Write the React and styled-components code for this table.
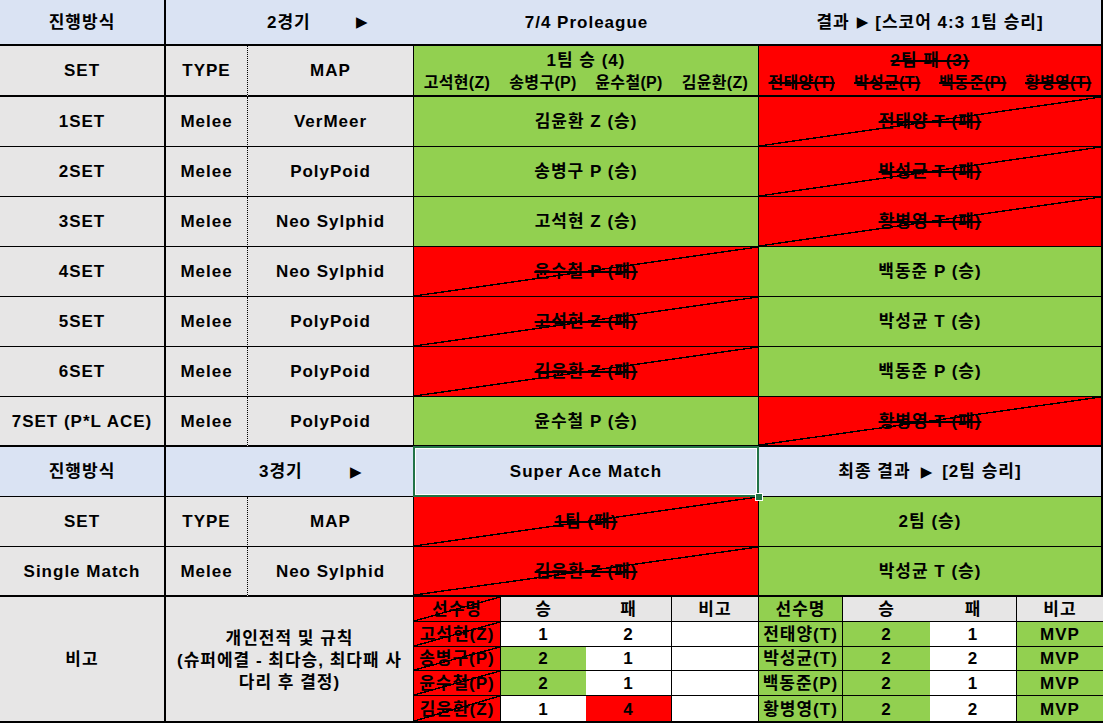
import React from 'react';
import styled, { createGlobalStyle, css } from 'styled-components';

const GlobalStyle = createGlobalStyle`
  html, body { margin: 0; padding: 0; background: #ffffff; }
  body {
    font-family: "Liberation Sans", "Noto Sans CJK KR", sans-serif;
    font-weight: 700;
    color: #000;
  }
`;

const BG = {
  blue: '#DAE3F3',
  grey: '#E7E6E6',
  green: '#92D050',
  red: '#FF0000',
  white: '#FFFFFF',
};

const crossLine = css`
  background-image: linear-gradient(
    to bottom right,
    transparent calc(50% - 0.7px),
    #000 calc(50% - 0.7px),
    #000 calc(50% + 0.7px),
    transparent calc(50% + 0.7px)
  );
`;

const Sheet = styled.div`
  display: grid;
  width: 1103px;
  grid-template-columns: 166px 82px 166px 345px 344px;
  grid-template-rows: 46px 51px repeat(10, 50px) 126px;
`;

const Cell = styled.div`
  grid-column: span ${(p) => p.$span || 1};
  box-sizing: border-box;
  display: flex;
  align-items: center;
  justify-content: center;
  padding-top: 2px;
  background-color: ${(p) => BG[p.$bg || 'grey']};
  border-right: ${(p) => p.$br || 'none'};
  border-bottom: ${(p) => p.$bb || 'none'};
  font-size: 17px;
  letter-spacing: 1px;
  line-height: 1.2;
  white-space: pre;
  ${(p) => p.$cross && crossLine}
`;

const Struck = styled.span`
  text-decoration: ${(p) => (p.$on ? 'line-through' : 'none')};
  text-decoration-thickness: 1.5px;
`;

const Arrow = styled.span`
  display: inline-block;
  font-family: "DejaVu Sans", sans-serif;
  font-size: 15px;
  letter-spacing: 0;
  transform: translateY(-1px);
  margin: 0 ${(p) => p.$gap || 7}px;
`;

const RoundCell = styled(Cell)`
  justify-content: flex-start;
  padding-left: ${(p) => p.$pad}px;
`;

const RoundLabel = styled.span`
  width: ${(p) => p.$w}px;
`;

const Selected = styled(Cell)`
  position: relative;
  &::after {
    content: '';
    position: absolute;
    left: -1px;
    top: -1px;
    right: -1px;
    bottom: -1px;
    border: 2px solid #217346;
    box-shadow: inset 0 0 0 1px #ffffff;
    pointer-events: none;
  }
  &::before {
    content: '';
    position: absolute;
    right: -5px;
    bottom: -5px;
    width: 6px;
    height: 6px;
    background: #217346;
    border: 1px solid #ffffff;
    z-index: 2;
  }
`;

const TeamHead = styled(Cell)`
  flex-direction: column;
  justify-content: flex-start;
  padding-top: 4px;
`;

const TeamTitle = styled.div`
  height: 23px;
  display: flex;
  align-items: center;
`;

const NameRow = styled.div`
  width: 100%;
  display: grid;
  grid-template-columns: repeat(4, 1fr);
  font-size: 16px;
  letter-spacing: 0.3px;
`;

const Name = styled.div`
  text-align: center;
`;

const Note = styled(Cell)`
  text-align: center;
  line-height: 22px;
  padding-top: 3px;
`;

const Records = styled.div`
  box-sizing: border-box;
  display: grid;
  grid-template-columns: ${(p) => p.$cols};
  grid-template-rows: repeat(5, 1fr);
  border-bottom: 2px solid #000;
  border-right: ${(p) => p.$br};
`;

const RecCell = styled.div`
  box-sizing: border-box;
  display: flex;
  align-items: center;
  justify-content: center;
  padding-top: 1px;
  background-color: ${(p) => BG[p.$bg || 'white']};
  border-right: ${(p) => (p.$br ? '1px solid #000' : 'none')};
  border-bottom: ${(p) => (p.$last ? 'none' : '1px solid #000')};
  font-size: 17px;
  letter-spacing: 1px;
  line-height: 1;
  white-space: nowrap;
  ${(p) => p.$cross && crossLine}
`;

const B1 = '1px solid #000';
const B2 = '2px solid #000';
const DOT = '1px dotted #000';

const sets = [
  ['1SET', 'VerMeer', true, '김윤환 Z (승)', '전태양 T (패)'],
  ['2SET', 'PolyPoid', true, '송병구 P (승)', '박성균 T (패)'],
  ['3SET', 'Neo Sylphid', true, '고석현 Z (승)', '황병영 T (패)'],
  ['4SET', 'Neo Sylphid', false, '윤수철 P (패)', '백동준 P (승)'],
  ['5SET', 'PolyPoid', false, '고석현 Z (패)', '박성균 T (승)'],
  ['6SET', 'PolyPoid', false, '김윤환 Z (패)', '백동준 P (승)'],
  ['7SET (P*L ACE)', 'PolyPoid', true, '윤수철 P (승)', '황병영 T (패)'],
];

const team1 = ['고석현(Z)', '송병구(P)', '윤수철(P)', '김윤환(Z)'];
const team2 = ['전태양(T)', '박성균(T)', '백동준(P)', '황병영(T)'];

const rec1 = [
  ['고석현(Z)', 1, 2],
  ['송병구(P)', 2, 1],
  ['윤수철(P)', 2, 1],
  ['김윤환(Z)', 1, 4],
];
const rec2 = [
  ['전태양(T)', 2, 1],
  ['박성균(T)', 2, 2],
  ['백동준(P)', 2, 1],
  ['황병영(T)', 2, 2],
];

function TeamCell({ won, text, right, bottom }) {
  return (
    <Cell $bg={won ? 'green' : 'red'} $cross={!won} $br={right} $bb={bottom}>
      <Struck $on={!won}>{text}</Struck>
    </Cell>
  );
}

function RecordTable({ rows, losing, cols, outer }) {
  return (
    <Records $cols={cols} $br={outer}>
      <RecCell $bg={losing ? 'red' : 'green'} $cross={losing} $br>선수명</RecCell>
      <RecCell $bg="grey">승</RecCell>
      <RecCell $bg="grey" $br>패</RecCell>
      <RecCell $bg="grey" $br={!outer}>비고</RecCell>
      {rows.map(([name, w, l], i) => {
        const last = i === rows.length - 1;
        return (
          <React.Fragment key={name}>
            <RecCell $bg={losing ? 'red' : 'green'} $cross={losing} $br $last={last}>
              {name}
            </RecCell>
            <RecCell $bg={w >= 2 ? 'green' : 'white'} $last={last}>
              {w}
            </RecCell>
            <RecCell $bg={l >= 4 ? 'red' : 'white'} $br $last={last}>
              {l}
            </RecCell>
            <RecCell $bg={losing ? 'white' : 'green'} $br={!outer} $last={last}>
              {losing ? '' : 'MVP'}
            </RecCell>
          </React.Fragment>
        );
      })}
    </Records>
  );
}

export default function App() {
  return (
    <>
      <GlobalStyle />
      <Sheet>
        {/* row 1 */}
        <Cell $bg="blue" $br={B2} $bb={B2}>진행방식</Cell>
        <RoundCell $bg="blue" $span={2} $bb={B2} $pad={101}>
          <RoundLabel $w={48}>2경기</RoundLabel>
          <Arrow $gap={41}>▶</Arrow>
        </RoundCell>
        <Cell $bg="blue" $bb={B2}>7/4 Proleague</Cell>
        <Cell $bg="blue" $bb={B2} $br={B2}>
          결과<Arrow>▶</Arrow>[스코어 4:3 1팀 승리]
        </Cell>

        {/* row 2 */}
        <Cell $br={B2} $bb={B2}>SET</Cell>
        <Cell $br={DOT} $bb={B2}>TYPE</Cell>
        <Cell $br={B1} $bb={B2}>MAP</Cell>
        <TeamHead $bg="green" $br={B1} $bb={B2}>
          <TeamTitle>1팀 승 (4)</TeamTitle>
          <NameRow>
            {team1.map((n) => (
              <Name key={n}>{n}</Name>
            ))}
          </NameRow>
        </TeamHead>
        <TeamHead $bg="red" $br={B2} $bb={B2}>
          <TeamTitle>
            <Struck $on>2팀 패 (3)</Struck>
          </TeamTitle>
          <NameRow>
            {team2.map((n) => (
              <Name key={n}>
                <Struck $on>{n}</Struck>
              </Name>
            ))}
          </NameRow>
        </TeamHead>

        {/* sets */}
        {sets.map(([set, map, won, a, b], i) => {
          const bb = i === sets.length - 1 ? B2 : B1;
          return (
            <React.Fragment key={set}>
              <Cell $br={B2} $bb={bb}>{set}</Cell>
              <Cell $br={DOT} $bb={bb}>Melee</Cell>
              <Cell $br={B1} $bb={bb}>{map}</Cell>
              <TeamCell won={won} text={a} right={B1} bottom={bb} />
              <TeamCell won={!won} text={b} right={B2} bottom={bb} />
            </React.Fragment>
          );
        })}

        {/* row 10 */}
        <Cell $bg="blue" $br={B2} $bb={B1}>진행방식</Cell>
        <RoundCell $bg="blue" $span={2} $bb={B1} $br={B1} $pad={93}>
          <RoundLabel $w={48}>3경기</RoundLabel>
          <Arrow $gap={43}>▶</Arrow>
        </RoundCell>
        <Selected $bg="blue" $bb={B1} $br={B1}>Super Ace Match</Selected>
        <Cell $bg="blue" $bb={B1} $br={B2}>
          최종 결과<Arrow $gap={10}>▶</Arrow>[2팀 승리]
        </Cell>

        {/* row 11 */}
        <Cell $br={B2} $bb={B1}>SET</Cell>
        <Cell $br={DOT} $bb={B1}>TYPE</Cell>
        <Cell $br={B1} $bb={B1}>MAP</Cell>
        <TeamCell won={false} text="1팀 (패)" right={B1} bottom={B1} />
        <TeamCell won text="2팀 (승)" right={B2} bottom={B1} />

        {/* row 12 */}
        <Cell $br={B2} $bb={B2}>Single Match</Cell>
        <Cell $br={DOT} $bb={B2}>Melee</Cell>
        <Cell $br={B1} $bb={B2}>Neo Sylphid</Cell>
        <TeamCell won={false} text="김윤환 Z (패)" right={B1} bottom={B2} />
        <TeamCell won text="박성균 T (승)" right={B2} bottom={B2} />

        {/* row 13 */}
        <Cell $br={B2} $bb={B2}>비고</Cell>
        <Note $span={2} $br={B1} $bb={B2}>
          개인전적 및 규칙
          <br />
          (슈퍼에결 - 최다승, 최다패 사
          <br />
          다리 후 결정)
        </Note>
        <RecordTable rows={rec1} losing cols="87px 85px 86px 87px" />
        <RecordTable rows={rec2} losing={false} cols="84px 87px 87px 86px" outer={B2} />
      </Sheet>
    </>
  );
}
